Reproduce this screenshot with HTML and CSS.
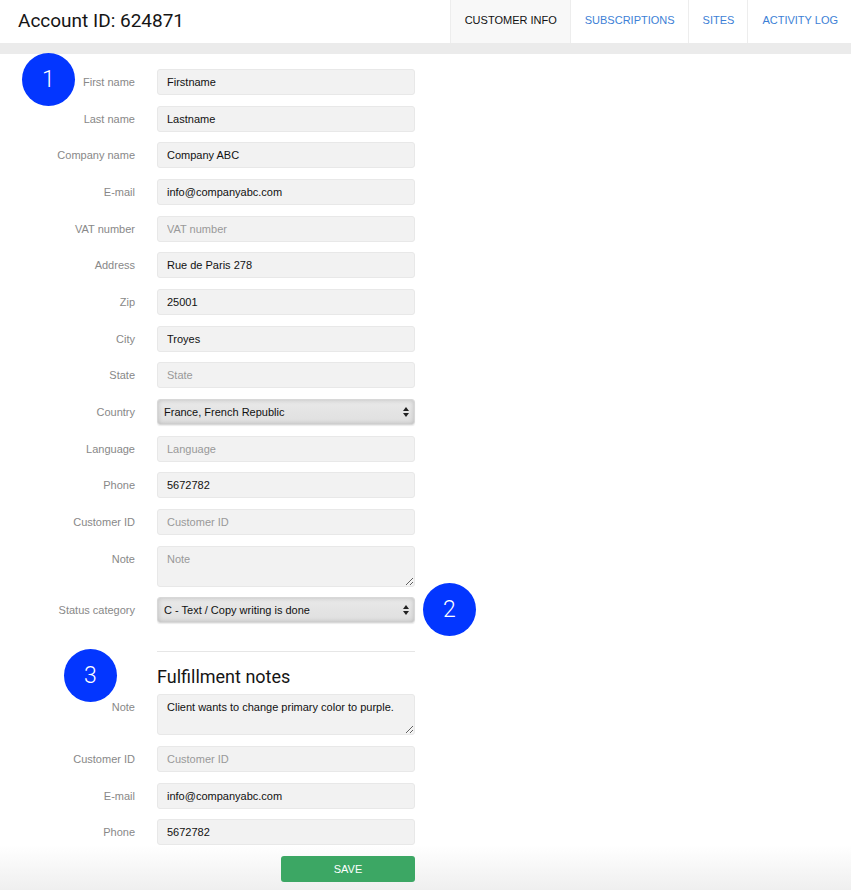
FILE: index.html
```html
<!DOCTYPE html>
<html lang="en">
<head>
    <meta charset="UTF-8">
    <meta name="viewport" content="width=device-width, initial-scale=1.0">
    <title>Account 624871</title>
    <link rel="stylesheet" href="styles.css">
</head>
<body>

<div class="topbar">
    <h1 class="account-title">Account ID: 624871</h1>
    <ul class="tabs">
        <li class="tab active">Customer info</li>
        <li class="tab">Subscriptions</li>
        <li class="tab">Sites</li>
        <li class="tab">Activity log</li>
    </ul>
</div>
<div class="band"></div>

<form class="customer-form">
    <span class="step step-1">1</span>
    <span class="step step-2">2</span>
    <span class="step step-3">3</span>

    <div class="row"><label>First name</label><input type="text" value="Firstname"></div>
    <div class="row"><label>Last name</label><input type="text" value="Lastname"></div>
    <div class="row"><label>Company name</label><input type="text" value="Company ABC"></div>
    <div class="row"><label>E-mail</label><input type="email" value="info@companyabc.com"></div>
    <div class="row"><label>VAT number</label><input type="text" placeholder="VAT number"></div>
    <div class="row"><label>Address</label><input type="text" value="Rue de Paris 278"></div>
    <div class="row"><label>Zip</label><input type="text" value="25001"></div>
    <div class="row"><label>City</label><input type="text" value="Troyes"></div>
    <div class="row"><label>State</label><input type="text" placeholder="State"></div>
    <div class="row">
        <label>Country</label>
        <div class="select-wrap">
            <select><option>France, French Republic</option></select>
            <svg class="arrows" width="6" height="10" viewBox="0 0 6 10"><path d="M3 0L6 4H0z M3 10L0 6H6z" fill="#222"/></svg>
        </div>
    </div>
    <div class="row"><label>Language</label><input type="text" placeholder="Language"></div>
    <div class="row"><label>Phone</label><input type="text" value="5672782"></div>
    <div class="row"><label>Customer ID</label><input type="text" placeholder="Customer ID"></div>
    <div class="row tall"><label>Note</label><textarea placeholder="Note"></textarea></div>
    <div class="row">
        <label>Status category</label>
        <div class="select-wrap">
            <select><option>C - Text / Copy writing is done</option></select>
            <svg class="arrows" width="6" height="10" viewBox="0 0 6 10"><path d="M3 0L6 4H0z M3 10L0 6H6z" fill="#222"/></svg>
        </div>
    </div>

    <hr class="divider">
    <h2 class="section-title">Fulfillment notes</h2>

    <div class="row tall"><label>Note</label><textarea>Client wants to change primary color to purple.</textarea></div>
    <div class="row"><label>Customer ID</label><input type="text" placeholder="Customer ID"></div>
    <div class="row"><label>E-mail</label><input type="email" value="info@companyabc.com"></div>
    <div class="row"><label>Phone</label><input type="text" value="5672782"></div>

    <div class="actions">
        <button type="button" class="save-btn">SAVE</button>
    </div>
</form>

</body>
</html>
```

FILE: styles.css
```css
html, body {
    margin: 0;
    min-height: 100%;
}
body {
    font-family: "Liberation Sans", Arial, sans-serif;
    font-size: 11px;
    color: #111;
    min-height: 100vh;
    background: linear-gradient(#fff calc(100% - 45px), #efefef);
}
.topbar {
    display: flex;
    justify-content: space-between;
    align-items: stretch;
    height: 43px;
    background-color: #fff;
}
.account-title {
    margin: 0;
    padding-left: 18px;
    font-family: Roboto, "Open Sans", sans-serif;
    font-weight: 400;
    font-size: 19px;
    line-height: 41px;
    color: #151515;
}
.tabs {
    display: flex;
    list-style: none;
    margin: 0;
    padding: 0;
}
.tab {
    padding: 0 13px 0 14px;
    line-height: 41px;
    text-transform: uppercase;
    color: #3d7fd6;
    border-left: 1px solid #ededed;
}
.tab.active {
    color: #111;
    background-color: #f8f8f8;
}
.band {
    height: 11px;
    background-color: #ebebeb;
}
.customer-form {
    position: relative;
    padding: 15px 0 8px 0;
    width: 415px;
}
.row {
    display: grid;
    grid-template-columns: 135px 258px;
    column-gap: 22px;
    align-items: center;
    margin-bottom: 10.67px;
}
.row label {
    text-align: right;
    color: #888;
    line-height: 14px;
}
.row.tall {
    align-items: start;
}
.row.tall label {
    padding-top: 6px;
}
.row input,
.row textarea,
.row select {
    box-sizing: border-box;
    width: 258px;
    font-family: "Liberation Sans", Arial, sans-serif;
    font-size: 11px;
    color: #111;
    background-color: #f2f2f2;
    border: 1px solid #e8e8e8;
    border-radius: 3px;
    outline: none;
}
.row input {
    height: 26px;
    padding: 0 9px;
}
.row textarea {
    height: 41px;
    padding: 5px 9px;
    line-height: 14px;
    resize: vertical;
    display: block;
}
::placeholder {
    color: #999;
}
.select-wrap {
    position: relative;
    width: 258px;
}
.row select {
    -webkit-appearance: none;
    appearance: none;
    display: block;
    height: 26px;
    padding: 0 6px;
    border-color: #d8d8d8;
    background: linear-gradient(#e9e9e9, #dfdfdf);
    box-shadow: inset 0 0 5px rgba(0, 0, 0, 0.18), 0 1px 1px rgba(0, 0, 0, 0.08);
}
.arrows {
    position: absolute;
    right: 6px;
    top: 8px;
}
.divider {
    margin: 28px 0 0 157px;
    width: 258px;
    border: none;
    border-top: 1px solid #e6e6e6;
}
.section-title {
    margin: 13px 0 5px 157px;
    font-family: Roboto, "Open Sans", sans-serif;
    font-weight: 400;
    font-size: 18px;
    line-height: 24px;
    color: #151515;
}
.actions {
    display: flex;
    justify-content: flex-end;
}
.save-btn {
    width: 134px;
    height: 26px;
    border: none;
    border-radius: 3px;
    background-color: #3ca764;
    color: #fff;
    font-family: "Liberation Sans", Arial, sans-serif;
    font-size: 11px;
    cursor: pointer;
}
.step {
    position: absolute;
    width: 53px;
    height: 53px;
    border-radius: 50%;
    background-color: #0336ff;
    color: #fff;
    font-family: Roboto, sans-serif;
    font-weight: 300;
    font-size: 23px;
    line-height: 53px;
    text-align: center;
    z-index: 1;
}
.step-1 {
    left: 22px;
    top: -1px;
}
.step-2 {
    left: 423px;
    top: 529px;
}
.step-3 {
    left: 64px;
    top: 595px;
}
```
